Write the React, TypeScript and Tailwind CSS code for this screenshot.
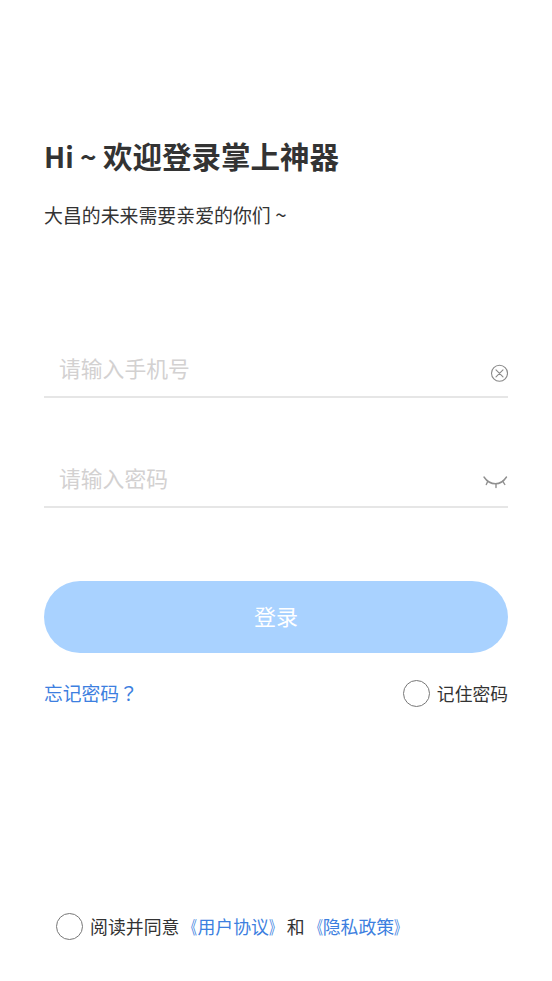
import { useState } from "react";

function ClearIcon() {
    return (
        <svg width="18" height="18" viewBox="0 0 18 18" fill="none" stroke="#8a8a8a" strokeWidth="1.1" strokeLinecap="round">
            <circle cx="9.5" cy="9.3" r="8" />
            <path d="M6 5.800l7 7M13 5.800l-7 7" />
        </svg>
    );
}

function EyeClosedIcon() {
    return (
        <svg width="26" height="14" viewBox="0 0 26 14" fill="none" stroke="#8f8f8f" strokeWidth="1.4" strokeLinecap="round">
            <path d="M2 2C5 6.500 9 8.800 13.500 8.800S21.500 6.500 24.500 2" />
            <path d="M5.800 6.300L4.300 9.500M14 8.800V12.500M20.800 6.300L22.800 9.500" />
        </svg>
    );
}

function Radio({ checked, onClick }: { checked: boolean; onClick: () => void }) {
    return (
        <button
            type="button"
            role="checkbox"
            aria-checked={checked}
            onClick={onClick}
            className={`size-[27px] shrink-0 rounded-full border border-[#777] ${checked ? "bg-[#3d7fe0]" : "bg-white"}`}
        />
    );
}

// Agreement title in slim book-title brackets
function DocLink({ title }: { title: string }) {
    return (
        <a className="text-[#3d7fe0]">
            <span className="inline-block origin-right scale-x-[.68]">《</span>
            {title}
            <span className="inline-block origin-left scale-x-[.68]">》</span>
        </a>
    );
}

export default function App() {
    const [phone, setPhone] = useState("");
    const [password, setPassword] = useState("");
    const [remember, setRemember] = useState(false);
    const [agreed, setAgreed] = useState(false);

    return (
        <div className="flex h-[981px] w-[552px] flex-col bg-white px-11 font-['Noto_Sans_CJK_SC',sans-serif] text-[#333]">
            {/* Greeting */}
            <h1 className="mt-[134px] h-[42px] whitespace-nowrap text-[29.5px] leading-[42px] font-bold">
                <span className="text-[28px]">Hi ~ </span>欢迎登录掌上神器
            </h1>
            <p className="mt-[25px] h-[26px] whitespace-nowrap text-[18.9px] leading-[26px]">
                大昌的未来需要亲爱的你们<span className="text-[20.5px]"> ~</span>
            </p>

            {/* Fields */}
            <div className="mt-[114px] flex h-[57px] items-center justify-between border-b-2 border-[#e6e6e6] pl-[15px]">
                <input
                    value={phone}
                    onChange={(e) => setPhone(e.target.value)}
                    placeholder="请输入手机号"
                    className="w-[300px] text-[21.8px] outline-none placeholder:text-[#d3d1d1]"
                />
                <button type="button" aria-label="clear" className="mt-2" onClick={() => setPhone("")}>
                    <ClearIcon />
                </button>
            </div>
            <div className="mt-[53px] flex h-[57px] items-center justify-between border-b-2 border-[#e6e6e6] pl-[15px]">
                <input
                    type="password"
                    value={password}
                    onChange={(e) => setPassword(e.target.value)}
                    placeholder="请输入密码"
                    className="w-[300px] text-[21.8px] outline-none placeholder:text-[#d3d1d1]"
                />
                <button type="button" aria-label="show password" className="mt-1.5">
                    <EyeClosedIcon />
                </button>
            </div>

            <button type="button" className="mt-[73px] h-[72px] rounded-full bg-[#a9d2ff] pb-1 text-[22px] text-white">
                登录
            </button>

            <div className="mt-[27px] flex h-[27px] items-center justify-between text-[17.8px]">
                <a className="text-[18.8px] text-[#3d7fe0]">
                    忘记密码<span className="font-['Noto_Sans_CJK_TC',sans-serif]">？</span>
                </a>
                <div className="flex items-center gap-[7px]">
                    <Radio checked={remember} onClick={() => setRemember(!remember)} />
                    <span>记住密码</span>
                </div>
            </div>

            {/* Agreement */}
            <div className="mt-[206px] flex h-[27px] items-center gap-[7px] pl-3 text-[17.9px]">
                <Radio checked={agreed} onClick={() => setAgreed(!agreed)} />
                <p className="whitespace-nowrap">
                    阅读并同意<DocLink title="用户协议" />和<DocLink title="隐私政策" />
                </p>
            </div>
        </div>
    );
}
